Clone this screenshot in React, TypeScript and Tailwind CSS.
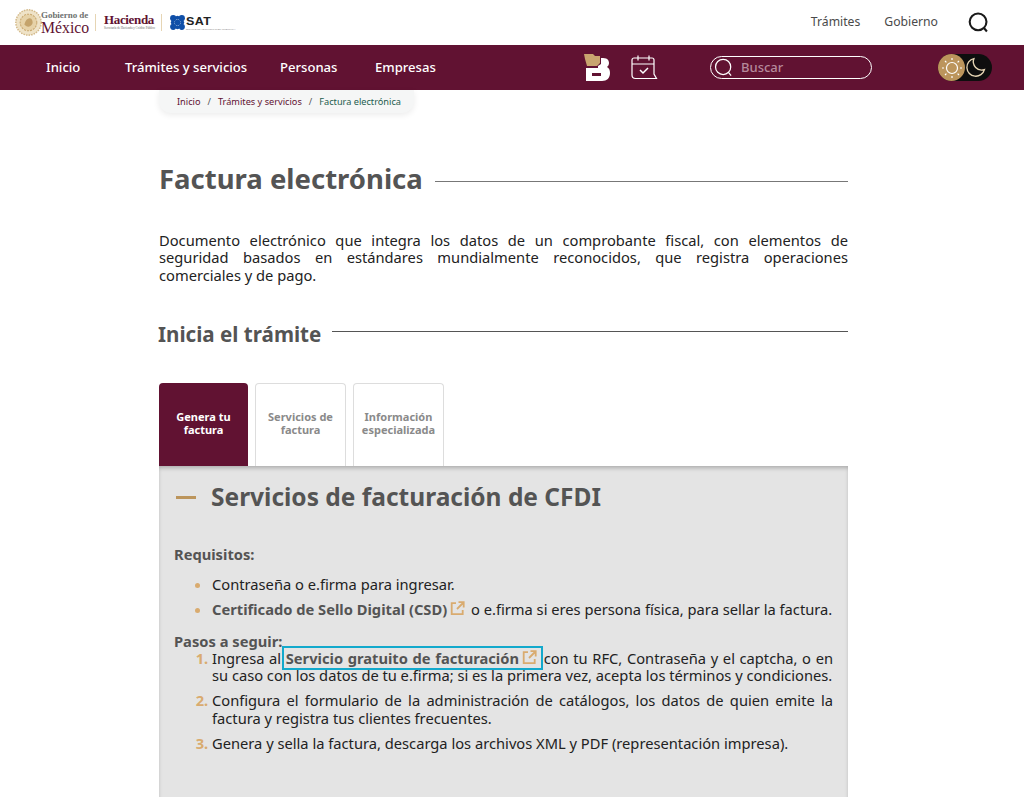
import React from "react";

const Ext = () => (
  <svg width="15" height="15" viewBox="0 0 15 15" fill="none" stroke="#d9ab6f" strokeWidth="1.8" className="inline-block align-[-1px] ml-[3px] mr-[2px]">
    <path d="M6 2.2H1.7v11h11V9" />
    <path d="M8.5 1.2h5.2v5.2M13.5 1.5 7 8" />
  </svg>
);

const Emblem = () => (
  <svg width="27" height="27" viewBox="0 0 26 26">
    <circle cx="13" cy="13" r="12.2" fill="#efe3c8" stroke="#d3b98a" strokeWidth="1.4" strokeDasharray="1.5 1" />
    <circle cx="13" cy="13" r="8" fill="#e6d2a8" stroke="#c9a86f" strokeDasharray="2 1" />
    <path d="M9 15c1-4 3-6 5-6s3 2 3 4-2 4-4 4-3-1-4-2z" fill="#c4a36b" />
  </svg>
);

const Dots = () => (
  <svg width="15" height="15" viewBox="0 0 15 15" fill="#0f4fa8">
    <circle cx="3.2" cy="3.2" r="3.1" /><circle cx="11.8" cy="3.2" r="3.1" />
    <circle cx="3.2" cy="11.8" r="3.1" /><circle cx="11.8" cy="11.8" r="3.1" />
    <circle cx="7.5" cy="7.5" r="3" /><circle cx="7.5" cy="2.8" r="2" /><circle cx="7.5" cy="12.2" r="2" />
    <circle cx="2.8" cy="7.5" r="2" /><circle cx="12.2" cy="7.5" r="2" />
  </svg>
);

const Search = ({ size, color, sw }: { size: number; color: string; sw: number }) => (
  <svg width={size} height={size} viewBox="0 0 20 20" fill="none" stroke={color} strokeWidth={sw}>
    <circle cx="9.6" cy="9.4" r="8" />
    <path d="m15.2 15.2 2.8 3.4" />
  </svg>
);

export default function App() {
  return (
    <div className="w-[1024px] h-[797px] overflow-hidden bg-white font-['Noto_Sans','Open_Sans',sans-serif] text-[#2c2c2c]">
      <header className="h-[45px] flex items-center pl-[15px] pr-[35px]">
        <div className="flex items-center">
          <Emblem />
          <div className="w-[48px] pt-[2px] -ml-px font-['Liberation_Serif',serif] text-[#611232] leading-none">
            <div className="text-[9px] font-bold tracking-[-0.05px] text-[#6f7271] whitespace-nowrap">Gobierno de</div>
            <div className="text-[15.8px] whitespace-nowrap">México</div>
          </div>
          <div className="ml-[6px] w-px h-[17px] bg-[#e6d5b4]" />
          <div className="ml-[8px] w-[51px] font-['Liberation_Serif',serif] text-[#611232] leading-none -mt-[1px]">
            <div className="text-[13px] font-bold tracking-[-0.35px] whitespace-nowrap">Hacienda</div>
            <div className="text-[3.1px] mt-[1px] text-[#666] whitespace-nowrap">Secretaría de Hacienda y Crédito Público</div>
          </div>
          <div className="ml-[6px] w-px h-[17px] bg-[#e6d5b4]" />
          <div className="ml-[8px]"><Dots /></div>
          <div className="ml-[1px] mt-[3px] w-[50px] leading-none">
            <div className="font-['Liberation_Sans',sans-serif] font-bold text-[10px] scale-x-[1.25] origin-left tracking-[0.3px] text-[#222]">SAT</div>
            <div className="text-[2.4px] mt-[1px] text-[#888] whitespace-nowrap">SERVICIO DE ADMINISTRACIÓN TRIBUTARIA</div>
          </div>
        </div>
        <nav className="ml-auto flex items-center text-[12.2px] text-[#4a4a4a]">
          <span>Trámites</span>
          <span className="ml-[24px]">Gobierno</span>
          <span className="ml-[30px] flex"><Search size={21} color="#1a1a1a" sw={2} /></span>
        </nav>
      </header>

      <div className="h-[45px] bg-[#611232] flex items-center text-white text-[13.1px] font-medium pl-[46px] pr-[32px]">
        <span className="w-[79px] pt-px">Inicio</span>
        <span className="w-[155px] pt-px">Trámites y servicios</span>
        <span className="w-[95px] pt-px">Personas</span>
        <span className="w-[209px] pt-px">Empresas</span>
        <svg width="27" height="28" viewBox="0 0 27 28">
          <path d="M0 0h9l2 2h5v7l-3 3H3L1 5z" fill="#c9a46f" />
          <path d="M2 14H14V12L17 10V4H19C24 4 25 7 25 9C25 11 24 12 23 13C25 14 26 16 26 19C26 24 23 27 18 27H2Z" fill="#fff" />
          <path d="M8 19h9v3H8z" fill="#611232" />
        </svg>
        <svg width="28" height="27" viewBox="0 0 28 27" fill="none" stroke="#fff" strokeWidth="1.2" className="ml-[19px]">
          <path d="M2 21V6a2 2 0 0 1 2-2h18a2 2 0 0 1 2 2v14l2.5 4.5H5.5C3 24.5 2 23 2 21z" />
          <path d="M2 10h22M8 1.5v5M19 1.5v5" />
          <path d="m10 16 3 3 5-5" strokeWidth="1.5" />
        </svg>
        <div className="ml-[52px] w-[162px] h-[23px] rounded-full border border-white flex items-center pl-[3px]">
          <Search size={19} color="#fff" sw={1.3} />
          <span className="ml-[8px] pt-px text-[13px] font-medium text-[#b5899b]">Buscar</span>
        </div>
        <div className="ml-auto w-[54px] h-[27px] rounded-full bg-[#0e0e0e] flex items-center">
          <div className="w-[27px] h-[27px] rounded-full bg-[#bc955c] flex items-center justify-center">
            <svg width="22" height="22" viewBox="0 0 22 22" fill="none" stroke="#fff" strokeWidth="1.2">
              <circle cx="11" cy="11" r="5.5" />
              <path d="M11 1v2M11 19v2M1 11h2M19 11h2M4 4l1.4 1.4M18 4l-1.4 1.4M4 18l1.4-1.4M18 18l-1.4-1.4" />
            </svg>
          </div>
          <svg width="21" height="21" viewBox="0 0 20 20" fill="none" stroke="#e6d5b4" strokeWidth="1.3">
            <path d="M8.5 1.5a8.5 8.5 0 1 0 10 10.5A8 8 0 0 1 8.5 1.5z" />
          </svg>
        </div>
      </div>

      <main className="w-[689px] ml-[159px]">
        <div className="w-[255px] h-[23px] rounded-b-[12px] bg-[#f5f6f6] shadow-[0_2px_6px_rgba(0,0,0,0.08)] flex items-center pl-[18px] text-[9.2px] whitespace-nowrap">
          <span className="text-[#611232]">Inicio</span>
          <span className="mx-[7px] text-[#555]">/</span>
          <span className="text-[#611232]">Trámites y servicios</span>
          <span className="mx-[7px] text-[#555]">/</span>
          <span className="text-[#1d5c4e]">Factura electrónica</span>
        </div>

        <div className="mt-[45px] flex items-center h-[40px]">
          <h1 className="text-[27.5px] pt-[1px] font-bold text-[#545454] leading-none">Factura electrónica</h1>
          <div className="flex-1 ml-[12px] h-px bg-[#777] mt-[6px]" />
        </div>

        <p className="mt-[33.5px] text-[14.7px] leading-[17.5px] text-justify text-[#222]">
          Documento electrónico que integra los datos de un comprobante fiscal, con elementos de seguridad basados en estándares mundialmente reconocidos, que registra operaciones comerciales y de pago.
        </p>

        <div className="mt-[35px] flex items-center h-[30px] -ml-px">
          <h2 className="text-[20.6px] font-bold text-[#545454] leading-none">Inicia el trámite</h2>
          <div className="flex-1 ml-[11px] h-px bg-[#555] -mt-[6px]" />
        </div>

        <div className="mt-[34px] flex h-[83px] text-center text-[11px] leading-[13px] font-bold">
          <div className="w-[89px] pb-[4px] rounded-t-[4px] bg-[#611232] text-white flex items-center justify-center"><span>Genera tu<br />factura</span></div>
          <div className="ml-[7px] w-[91px] pb-[4px] rounded-t-[4px] bg-white border border-[#ddd] border-b-0 text-[#8a8a8a] flex items-center justify-center"><span>Servicios de<br />factura</span></div>
          <div className="ml-[7px] w-[91px] pb-[4px] rounded-t-[4px] bg-white border border-[#ddd] border-b-0 text-[#8a8a8a] flex items-center justify-center"><span>Información<br />especializada</span></div>
        </div>

        <section className="h-[340px] bg-[#e4e4e4] shadow-[inset_0_3px_4px_-1px_rgba(0,0,0,0.25)] px-[15px] text-[14.7px] leading-[17.5px] text-[#222]">
          <div className="flex items-center pt-[15px] h-[48px]">
            <div className="w-[20px] h-[3px] ml-[2px] bg-[#bc955c]" />
            <h3 className="ml-[15px] text-[24.5px] font-bold text-[#545454] leading-none">Servicios de facturación de CFDI</h3>
          </div>
          <div className="mt-[32px] font-bold text-[#545454]">Requisitos:</div>
          <ul className="mt-[12px] pl-[38px] list-disc marker:text-[#d9ab6f] flex flex-col gap-[8px]">
            <li>Contraseña o e.firma para ingresar.</li>
            <li><b className="font-bold text-[#545454]">Certificado de Sello Digital (CSD)</b><Ext /> o e.firma si eres persona física, para sellar la factura.</li>
          </ul>
          <div className="mt-[14px] font-bold text-[#545454] leading-[16px]">Pasos a seguir:</div>
          <ol className="mt-[1px] pl-[38px] list-decimal marker:text-[#d9ab6f] marker:font-bold flex flex-col gap-[7.5px] text-justify">
            <li className="[word-spacing:-0.05px]">Ingresa al <a className="outline-2 outline-[#13a9cc] px-[2px] -mx-[2px] font-bold text-[#545454]">Servicio gratuito de facturación<Ext /></a> con tu RFC, Contraseña y el captcha, o en su caso con los datos de tu e.firma; si es la primera vez, acepta los términos y condiciones.</li>
            <li>Configura el formulario de la administración de catálogos, los datos de quien emite la factura y registra tus clientes frecuentes.</li>
            <li>Genera y sella la factura, descarga los archivos XML y PDF (representación impresa).</li>
          </ol>
        </section>
      </main>
    </div>
  );
}
